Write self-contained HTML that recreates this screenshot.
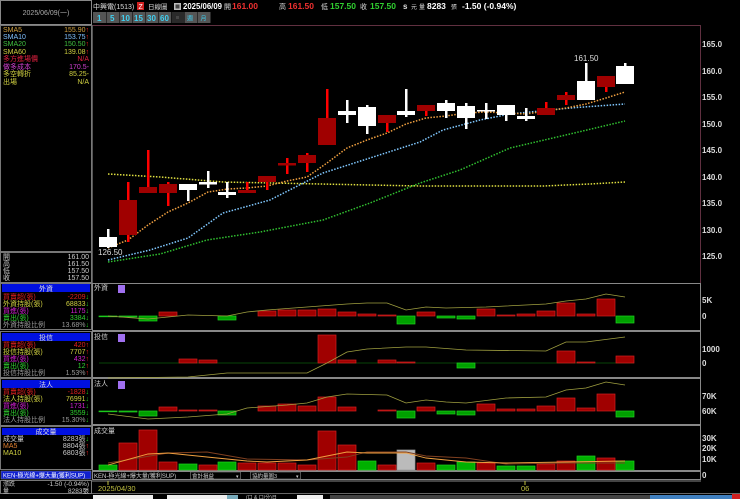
<!DOCTYPE html>
<html><head><meta charset="utf-8"><style>
html,body{margin:0;padding:0;background:#000;width:740px;height:499px;overflow:hidden}
svg{display:block}
text{font-family:"Liberation Sans","Noto Sans CJK TC",sans-serif}
.s{font-size:7px}
.ax{font-size:8px;font-weight:bold;fill:#ddd}
</style></head><body>
<svg width="740" height="499" viewBox="0 0 740 499" xmlns="http://www.w3.org/2000/svg">
<rect width="740" height="499" fill="#000"/>
<!-- header -->
<text x="93" y="9" font-size="7" fill="#ddd">中興電(1513)</text>
<rect x="137" y="2" width="7" height="8" fill="#d02020"/><text x="138.5" y="9" font-size="7" fill="#fff">Z</text>
<text x="148" y="9" font-size="6.5" fill="#ddd">日線圖</text>
<rect x="174" y="3" width="7" height="7" fill="#bbb"/><rect x="175.5" y="4.5" width="4" height="4" fill="#444"/>
<text x="183" y="9" font-size="8.5" font-weight="bold" fill="#fff" textLength="39" lengthAdjust="spacingAndGlyphs">2025/06/09</text>
<text x="224" y="9" font-size="7" fill="#ddd">開</text><text x="232" y="9" font-size="8.5" font-weight="bold" fill="#f03030">161.00</text>
<text x="279" y="9" font-size="7" fill="#ddd">高</text><text x="288" y="9" font-size="8.5" font-weight="bold" fill="#f03030">161.50</text>
<text x="321" y="9" font-size="7" fill="#ddd">低</text><text x="330" y="9" font-size="8.5" font-weight="bold" fill="#30d030">157.50</text>
<text x="360" y="9" font-size="7" fill="#ddd">收</text><text x="370" y="9" font-size="8.5" font-weight="bold" fill="#30d030">157.50</text>
<text x="403" y="9" font-size="8" font-weight="bold" fill="#ddd">s</text><text x="411" y="9" font-size="6" fill="#ddd">元</text>
<text x="419" y="9" font-size="6" fill="#ddd">量</text><text x="427" y="9" font-size="8.5" font-weight="bold" fill="#fff">8283</text>
<text x="451" y="9" font-size="6" fill="#ddd">張</text><text x="462" y="9" font-size="8.5" font-weight="bold" fill="#fff">-1.50 (-0.94%)</text>
<!-- buttons -->
<g font-size="8" font-weight="bold" fill="#40d0f0">
<rect x="93" y="12" width="13" height="11" fill="#555"/><text x="97" y="21">1</text>
<rect x="106.5" y="12" width="12.5" height="11" fill="#555"/><text x="110" y="21">5</text>
<rect x="119.5" y="12" width="12.5" height="11" fill="#555"/><text x="121" y="21">10</text>
<rect x="132.5" y="12" width="12.5" height="11" fill="#555"/><text x="134" y="21">15</text>
<rect x="145.5" y="12" width="12.5" height="11" fill="#555"/><text x="147" y="21">30</text>
<rect x="158.5" y="12" width="12.5" height="11" fill="#555"/><text x="160" y="21">60</text>
<rect x="171.5" y="12" width="12.5" height="11" fill="#2a2a2a"/><rect x="176" y="16" width="3" height="3" fill="#444"/>
<rect x="184.5" y="12" width="12.5" height="11" fill="#555"/><text x="187" y="20.5" font-size="6" font-weight="normal">週</text>
<rect x="197.5" y="12" width="13" height="11" fill="#555"/><text x="200.5" y="20.5" font-size="6" font-weight="normal">月</text>
</g>
<!-- left panel -->
<rect x="0.5" y="0.5" width="91" height="24" fill="#000" stroke="#888"/>
<text x="46" y="15" font-size="7" fill="#aaa" text-anchor="middle">2025/06/09(一)</text>
<rect x="0.5" y="25.5" width="91" height="226" fill="none" stroke="#777"/>
<g class="s">
<text x="3" y="32" fill="#d0a040">SMA5</text><text x="89" y="32" fill="#d0a040" text-anchor="end">155.90<tspan fill="#f02020">↑</tspan></text>
<text x="3" y="39" fill="#80c0ff">SMA10</text><text x="89" y="39" fill="#80c0ff" text-anchor="end">153.75<tspan fill="#f02020">↑</tspan></text>
<text x="3" y="46" fill="#40c040">SMA20</text><text x="89" y="46" fill="#40c040" text-anchor="end">150.50<tspan fill="#f02020">↑</tspan></text>
<text x="3" y="54" fill="#d0d040">SMA60</text><text x="89" y="54" fill="#d0d040" text-anchor="end">139.08<tspan fill="#f02020">↑</tspan></text>
<text x="3" y="61" fill="#e02040">多方進場價</text><text x="89" y="61" fill="#e02040" text-anchor="end">N/A</text>
<text x="3" y="69" fill="#d040d0">做多成本</text><text x="89" y="69" fill="#d040d0" text-anchor="end">170.5-</text>
<text x="3" y="76" fill="#d0d040">多空轉折</text><text x="89" y="76" fill="#d0d040" text-anchor="end">85.25-</text>
<text x="3" y="84" fill="#d0d040">出場</text><text x="89" y="84" fill="#d0d040" text-anchor="end">N/A</text>
</g>
<rect x="0.5" y="252.5" width="91" height="30" fill="none" stroke="#777"/>
<g class="s" fill="#ccc">
<text x="3" y="259">開</text><text x="89" y="259" text-anchor="end">161.00</text>
<text x="3" y="266">高</text><text x="89" y="266" text-anchor="end">161.50</text>
<text x="3" y="273">低</text><text x="89" y="273" text-anchor="end">157.50</text>
<text x="3" y="280">收</text><text x="89" y="280" text-anchor="end">157.50</text>
</g>
<!-- 外資 -->
<rect x="0.5" y="283.5" width="91" height="46" fill="none" stroke="#777"/>
<rect x="2" y="284" width="88" height="8" fill="#0010e0"/><text x="46" y="291" class="s" fill="#ddd" text-anchor="middle">外資</text>
<g class="s">
<text x="3" y="299" fill="#e02020">買賣超(張)</text><text x="89" y="299" fill="#e02020" text-anchor="end">-2209<tspan fill="#20d020">↓</tspan></text>
<text x="3" y="306" fill="#d0d040">外資持股(張)</text><text x="89" y="306" fill="#d0d040" text-anchor="end">68833<tspan fill="#20d020">↓</tspan></text>
<text x="3" y="313" fill="#d020d0">買進(張)</text><text x="89" y="313" fill="#d020d0" text-anchor="end">1175<tspan fill="#20d020">↓</tspan></text>
<text x="3" y="320" fill="#30d030">賣出(張)</text><text x="89" y="320" fill="#30d030" text-anchor="end">3384<tspan fill="#20d020">↓</tspan></text>
<text x="3" y="327" fill="#999">外資持股比例</text><text x="89" y="327" fill="#999" text-anchor="end">13.68%<tspan fill="#20d020">↓</tspan></text>
</g>
<!-- 投信 -->
<rect x="0.5" y="331.5" width="91" height="46" fill="none" stroke="#777"/>
<rect x="2" y="333" width="88" height="8" fill="#0010e0"/><text x="46" y="340" class="s" fill="#ddd" text-anchor="middle">投信</text>
<g class="s">
<text x="3" y="347" fill="#e02020">買賣超(張)</text><text x="89" y="347" fill="#e02020" text-anchor="end">420<tspan fill="#f02020">↑</tspan></text>
<text x="3" y="354" fill="#d0d040">投信持股(張)</text><text x="89" y="354" fill="#d0d040" text-anchor="end">7707<tspan fill="#f02020">↑</tspan></text>
<text x="3" y="361" fill="#d020d0">買進(張)</text><text x="89" y="361" fill="#d020d0" text-anchor="end">432<tspan fill="#f02020">↑</tspan></text>
<text x="3" y="368" fill="#30d030">賣出(張)</text><text x="89" y="368" fill="#30d030" text-anchor="end">12<tspan fill="#f02020">↑</tspan></text>
<text x="3" y="375" fill="#999">投信持股比例</text><text x="89" y="375" fill="#999" text-anchor="end">1.53%<tspan fill="#f02020">↑</tspan></text>
</g>
<!-- 法人 -->
<rect x="0.5" y="378.5" width="91" height="47" fill="none" stroke="#777"/>
<rect x="2" y="380" width="88" height="8" fill="#0010e0"/><text x="46" y="387" class="s" fill="#ddd" text-anchor="middle">法人</text>
<g class="s">
<text x="3" y="394" fill="#e02020">買賣超(張)</text><text x="89" y="394" fill="#e02020" text-anchor="end">-1828<tspan fill="#20d020">↓</tspan></text>
<text x="3" y="401" fill="#d0d040">法人持股(張)</text><text x="89" y="401" fill="#d0d040" text-anchor="end">76991<tspan fill="#20d020">↓</tspan></text>
<text x="3" y="408" fill="#d020d0">買進(張)</text><text x="89" y="408" fill="#d020d0" text-anchor="end">1731<tspan fill="#20d020">↓</tspan></text>
<text x="3" y="415" fill="#30d030">賣出(張)</text><text x="89" y="415" fill="#30d030" text-anchor="end">3559<tspan fill="#20d020">↓</tspan></text>
<text x="3" y="422" fill="#999">法人持股比例</text><text x="89" y="422" fill="#999" text-anchor="end">15.30%<tspan fill="#20d020">↓</tspan></text>
</g>
<!-- 成交量 -->
<rect x="0.5" y="426.5" width="91" height="43" fill="none" stroke="#777"/>
<rect x="2" y="428" width="88" height="7" fill="#0010e0"/><text x="46" y="434" class="s" fill="#ddd" text-anchor="middle">成交量</text>
<g class="s">
<text x="3" y="441" fill="#ccc">成交量</text><text x="89" y="441" fill="#ccc" text-anchor="end">8283張<tspan fill="#20d020">↓</tspan></text>
<text x="3" y="448" fill="#e08030">MA5</text><text x="89" y="448" fill="#ccc" text-anchor="end">8804張<tspan fill="#f02020">↑</tspan></text>
<text x="3" y="455" fill="#d0d040">MA10</text><text x="89" y="455" fill="#ccc" text-anchor="end">6803張<tspan fill="#f02020">↑</tspan></text>
</g>
<rect x="1" y="471" width="90" height="8" fill="#1020d0" stroke="#888" stroke-width="0.5"/>
<text x="3" y="477.5" font-size="6" fill="#fff">KEN-極光線+爆大量(獲利SUP)</text>
<rect x="0.5" y="480.5" width="91" height="13" fill="none" stroke="#777"/>
<text x="3" y="486" font-size="6" fill="#ccc">漲跌</text><text x="89" y="486" font-size="6.5" fill="#ccc" text-anchor="end">-1.50 (-0.94%)</text>
<text x="3" y="493" font-size="6" fill="#ccc">量</text><text x="89" y="493" font-size="6.5" fill="#ccc" text-anchor="end">8283張</text>

<!-- main chart frame -->
<line x1="92" y1="25.5" x2="700" y2="25.5" stroke="#603040"/>
<line x1="700.5" y1="25" x2="700.5" y2="283" stroke="#603040"/>
<line x1="92.5" y1="25" x2="92.5" y2="470" stroke="#555"/>
<g class="ax">
<text x="702" y="47">165.0</text><text x="702" y="74">160.0</text><text x="702" y="100">155.0</text>
<text x="702" y="127">150.0</text><text x="702" y="153">145.0</text><text x="702" y="180">140.0</text>
<text x="702" y="206">135.0</text><text x="702" y="233">130.0</text><text x="702" y="259">125.0</text>
</g>
<!-- MAs -->
<g fill="none" stroke-width="1.5" stroke-dasharray="1.5 1.5">
<polyline stroke="#e0e040" points="108,174 160,177 223,182 320,184 420,186 543,186 590,184 625,182"/>
<polyline stroke="#30c030" points="108,262 160,254 207,240 260,232 323,220 370,203 420,183 460,170 510,148 570,134 625,121"/>
<polyline stroke="#80c8ff" points="108,260 150,250 188,238 223,213 270,200 323,173 370,158 420,142 443,130 480,120 510,114 570,108 625,104"/>
<polyline stroke="#f0a040" points="108,248 128,240 148,225 168,212 188,203 208,192 228,189 247,188 267,186 287,181 307,177 327,163 347,148 367,140 387,133 406,124 426,118 446,116 466,113 486,112 506,113 526,114 546,111 566,108 586,104 606,98 625,92"/>
</g>
<!-- candles -->
<g>
<rect x="107" y="229" width="2.5" height="19" fill="#fff"/><rect x="99" y="237" width="18" height="10" fill="#fff"/>
<rect x="127" y="182" width="2.5" height="60" fill="#f00"/><rect x="119" y="200" width="18" height="35" fill="#a00000"/>
<rect x="147" y="150" width="2.5" height="43" fill="#f00"/><rect x="139" y="187" width="18" height="6" fill="#a00000"/>
<rect x="167" y="182" width="2.5" height="24" fill="#f00"/><rect x="159" y="184" width="18" height="9" fill="#a00000"/>
<rect x="187" y="184" width="2.5" height="17" fill="#fff"/><rect x="179" y="184" width="18" height="6" fill="#fff"/>
<rect x="207" y="171" width="2.5" height="17" fill="#fff"/><rect x="199" y="182" width="18" height="2.5" fill="#fff"/>
<rect x="226" y="182" width="2.5" height="16" fill="#fff"/><rect x="218" y="192" width="18" height="3" fill="#fff"/>
<rect x="246" y="182" width="2.5" height="11" fill="#f00"/><rect x="238" y="190" width="18" height="3" fill="#a00000"/>
<rect x="266" y="176" width="2.5" height="14" fill="#f00"/><rect x="258" y="176" width="18" height="6" fill="#a00000"/>
<rect x="286" y="158" width="2.5" height="16" fill="#f00"/><rect x="278" y="163" width="18" height="2.5" fill="#a00000"/>
<rect x="306" y="153" width="2.5" height="19" fill="#f00"/><rect x="298" y="155" width="18" height="8" fill="#a00000"/>
<rect x="326" y="89" width="2.5" height="56" fill="#f00"/><rect x="318" y="118" width="18" height="27" fill="#a00000"/>
<rect x="346" y="100" width="2.5" height="23" fill="#fff"/><rect x="338" y="111" width="18" height="4" fill="#fff"/>
<rect x="366" y="105" width="2.5" height="29" fill="#fff"/><rect x="358" y="107" width="18" height="19" fill="#fff"/>
<rect x="386" y="115" width="2.5" height="17" fill="#f00"/><rect x="378" y="115" width="18" height="8" fill="#a00000"/>
<rect x="405" y="89" width="2.5" height="28" fill="#fff"/><rect x="397" y="111" width="18" height="4" fill="#fff"/>
<rect x="425" y="105" width="2.5" height="11" fill="#f00"/><rect x="417" y="105" width="18" height="6" fill="#a00000"/>
<rect x="445" y="100" width="2.5" height="18" fill="#fff"/><rect x="437" y="103" width="18" height="8" fill="#fff"/>
<rect x="465" y="103" width="2.5" height="26" fill="#fff"/><rect x="457" y="106" width="18" height="12" fill="#fff"/>
<rect x="485" y="103" width="2.5" height="16" fill="#fff"/><rect x="477" y="110" width="18" height="1.5" fill="#fff"/>
<rect x="505" y="105" width="2.5" height="16" fill="#fff"/><rect x="497" y="105" width="18" height="10" fill="#fff"/>
<rect x="525" y="108" width="2.5" height="13" fill="#fff"/><rect x="517" y="116" width="18" height="3" fill="#fff"/>
<rect x="545" y="102" width="2.5" height="13" fill="#f00"/><rect x="537" y="108" width="18" height="7" fill="#a00000"/>
<rect x="565" y="92" width="2.5" height="13" fill="#f00"/><rect x="557" y="95" width="18" height="5" fill="#a00000"/>
<rect x="585" y="63" width="2.5" height="37" fill="#fff"/><rect x="577" y="81" width="18" height="19" fill="#fff"/>
<rect x="605" y="76" width="2.5" height="16" fill="#f00"/><rect x="597" y="76" width="18" height="11" fill="#a00000"/>
<rect x="624" y="63" width="2.5" height="21" fill="#fff"/><rect x="616" y="66" width="18" height="18" fill="#fff"/>
</g>
<text x="574" y="61" font-size="8" fill="#ddd">161.50</text>
<text x="98" y="255" font-size="8" fill="#ddd">126.50</text>

<!-- sub panel frames -->
<g fill="none" stroke="#888">
<rect x="92.5" y="283.5" width="608" height="47"/>
<rect x="92.5" y="331.5" width="608" height="46"/>
<rect x="92.5" y="378.5" width="608" height="46"/>
<rect x="92.5" y="425.5" width="608" height="45"/>
</g>
<g class="s" fill="#ccc"><text x="94" y="290">外資</text><text x="94" y="339">投信</text><text x="94" y="386">法人</text><text x="94" y="433">成交量</text></g>
<g fill="#a070f0"><rect x="118" y="285" width="7" height="8"/><rect x="118" y="334" width="7" height="8"/><rect x="118" y="381" width="7" height="8"/></g>
<g class="ax"><text x="702" y="303">5K</text><text x="702" y="319">0</text>
<text x="702" y="352">1000</text><text x="702" y="366">0</text>
<text x="702" y="399">70K</text><text x="702" y="414">60K</text>
<text x="702" y="441">30K</text><text x="702" y="451">20K</text><text x="702" y="462">10K</text><text x="702" y="478">0</text></g>

<!-- panel1 bars zero 316 -->
<g stroke-width="0.7">
<g fill="#a00000" stroke="#d02020">
<rect x="159" y="312" width="18" height="4"/><rect x="258" y="311" width="18" height="5"/><rect x="278" y="310" width="18" height="6"/><rect x="298" y="310" width="18" height="6"/><rect x="318" y="309" width="18" height="7"/><rect x="338" y="312" width="18" height="4"/><rect x="358" y="314" width="18" height="2"/><rect x="378" y="315" width="18" height="1"/><rect x="417" y="312" width="18" height="4"/><rect x="477" y="309" width="18" height="7"/><rect x="497" y="315" width="18" height="1"/><rect x="517" y="314" width="18" height="2"/><rect x="537" y="311" width="18" height="5"/><rect x="557" y="303" width="18" height="13"/><rect x="577" y="314" width="18" height="2"/><rect x="597" y="299" width="18" height="17"/>
</g>
<g fill="#00a000" stroke="#20d020">
<rect x="99" y="316" width="18" height="0.8"/><rect x="119" y="316" width="18" height="1"/><rect x="139" y="316" width="18" height="5"/><rect x="218" y="316" width="18" height="4"/><rect x="397" y="316" width="18" height="8"/><rect x="437" y="316" width="18" height="2"/><rect x="457" y="316" width="18" height="3"/><rect x="616" y="316" width="18" height="7"/>
</g>
<polyline fill="none" stroke="#a0a040" stroke-width="0.8" points="108,316 148,319 168,317 188,315 227,316 247,312 267,310 307,307 347,304 367,303 387,303 406,310 426,307 446,308 486,307 506,306 546,304 566,301 586,299 606,294 625,297"/>
</g>
<!-- panel2 zero 363 -->
<g stroke-width="0.7">
<line x1="99" y1="363" x2="634" y2="363" stroke="#0a5a0a"/>
<g fill="#a00000" stroke="#d02020">
<rect x="179" y="359" width="18" height="4"/><rect x="199" y="360" width="18" height="3"/><rect x="318" y="335" width="18" height="28"/><rect x="338" y="360" width="18" height="3"/><rect x="378" y="360" width="18" height="3"/><rect x="397" y="362" width="18" height="1"/><rect x="557" y="351" width="18" height="12"/><rect x="577" y="362" width="18" height="1"/><rect x="616" y="356" width="18" height="7"/>
</g>
<rect x="457" y="363" width="18" height="5" fill="#00a000" stroke="#20d020"/>
<polyline fill="none" stroke="#a0a040" stroke-width="0.8" points="108,378 188,377 227,373 307,373 327,363 347,352 367,349 406,347 426,347 466,350 546,351 566,342 586,342 625,337"/>
</g>
<!-- panel3 zero 411 -->
<g stroke-width="0.7">
<g fill="#a00000" stroke="#d02020">
<rect x="159" y="407" width="18" height="4"/><rect x="179" y="410" width="18" height="1"/><rect x="199" y="410" width="18" height="1"/><rect x="258" y="406" width="18" height="5"/><rect x="278" y="404" width="18" height="7"/><rect x="298" y="406" width="18" height="5"/><rect x="318" y="397" width="18" height="14"/><rect x="338" y="407" width="18" height="4"/><rect x="378" y="410" width="18" height="1"/><rect x="417" y="407" width="18" height="4"/><rect x="477" y="404" width="18" height="7"/><rect x="497" y="409" width="18" height="2"/><rect x="517" y="409" width="18" height="2"/><rect x="537" y="406" width="18" height="5"/><rect x="557" y="398" width="18" height="13"/><rect x="577" y="408" width="18" height="3"/><rect x="597" y="394" width="18" height="17"/>
</g>
<g fill="#00a000" stroke="#20d020">
<rect x="99" y="411" width="18" height="0.8"/><rect x="119" y="411" width="18" height="1"/><rect x="139" y="411" width="18" height="5"/><rect x="218" y="411" width="18" height="4"/><rect x="397" y="411" width="18" height="7"/><rect x="437" y="411" width="18" height="3"/><rect x="457" y="411" width="18" height="4"/><rect x="616" y="411" width="18" height="6"/>
</g>
<polyline fill="none" stroke="#a0a040" stroke-width="0.8" points="108,414 148,419 188,417 227,414 247,408 287,405 307,403 327,397 347,394 387,395 406,403 426,400 446,402 466,403 506,398 546,397 566,390 586,388 606,382 625,385"/>
</g>
<!-- panel4 volume bottom 470 -->
<g stroke-width="0.7">
<g fill="#a00000" stroke="#d02020">
<rect x="119" y="443" width="18" height="27"/><rect x="139" y="430" width="18" height="40"/><rect x="159" y="462" width="18" height="8"/><rect x="199" y="465" width="18" height="5"/><rect x="238" y="463" width="18" height="7"/><rect x="258" y="463" width="18" height="7"/><rect x="278" y="463" width="18" height="7"/><rect x="298" y="465" width="18" height="5"/><rect x="318" y="431" width="18" height="39"/><rect x="338" y="445" width="18" height="25"/><rect x="378" y="465" width="18" height="5"/><rect x="417" y="463" width="18" height="7"/><rect x="477" y="463" width="18" height="7"/><rect x="537" y="464" width="18" height="6"/><rect x="557" y="461" width="18" height="9"/><rect x="597" y="458" width="18" height="12"/>
</g>
<g fill="#00b000" stroke="#20d020">
<rect x="99" y="465" width="18" height="5"/><rect x="179" y="464" width="18" height="6"/><rect x="218" y="462" width="18" height="8"/><rect x="358" y="461" width="18" height="9"/><rect x="437" y="465" width="18" height="5"/><rect x="457" y="462" width="18" height="8"/><rect x="497" y="466" width="18" height="4"/><rect x="517" y="466" width="18" height="4"/><rect x="577" y="456" width="18" height="14"/><rect x="616" y="461" width="18" height="9"/>
</g>
<rect x="397" y="450" width="18" height="20" fill="#bbb" stroke="#999"/>
<polyline fill="none" stroke="#804020" stroke-width="0.9" points="108,463 168,453 207,452 247,459 307,460 347,457 367,452 406,452 426,456 466,458 506,464 566,463 625,463"/>
<polyline fill="none" stroke="#f0a040" stroke-width="0.9" points="108,465 148,454 168,453 207,457 247,461 267,462 307,460 327,456 347,452 367,453 406,453 426,458 466,462 506,463 566,462 625,461"/>
</g>
<!-- bottom controls -->
<rect x="92.5" y="471.5" width="608" height="8" fill="#000" stroke="#888"/>
<text x="94" y="478" font-size="6" fill="#ccc">KEN-極光線+爆大量(獲利SUP)</text>
<rect x="190.5" y="472" width="50" height="7" fill="#000" stroke="#888" stroke-width="0.6"/><text x="192" y="478" font-size="5.5" fill="#ccc">會計損益</text><text x="236" y="478" font-size="5" fill="#ccc">▾</text>
<rect x="250.5" y="472" width="50" height="7" fill="#000" stroke="#888" stroke-width="0.6"/><text x="252" y="478" font-size="5.5" fill="#ccc">協約量圖3</text><text x="296" y="478" font-size="5" fill="#ccc">▾</text>
<line x1="92" y1="481" x2="701" y2="481" stroke="#888"/>
<line x1="108" y1="481" x2="108" y2="485" stroke="#c0c040"/>
<line x1="525" y1="481" x2="525" y2="485" stroke="#c0c040"/>
<text x="98" y="491" font-size="7.5" fill="#c0c040">2025/04/30</text>
<text x="521" y="491" font-size="7.5" fill="#c0c040">06</text>
<line x1="92" y1="493.5" x2="740" y2="493.5" stroke="#666"/>
<rect x="93" y="495" width="60" height="4" fill="#eee"/>
<rect x="167" y="495" width="60" height="4" fill="#eee"/><rect x="227" y="495" width="11" height="4" fill="#7ab"/>
<text x="246" y="499" font-size="5" fill="#ccc">(口 &amp; 口/分)日</text>
<rect x="297" y="495" width="26" height="4" fill="#eee"/><rect x="330" y="495" width="320" height="4" fill="#444"/>
<rect x="650" y="495" width="82" height="4" fill="#4080c0"/><rect x="732" y="494" width="8" height="5" fill="#d02020"/>
</svg>
</body></html>
